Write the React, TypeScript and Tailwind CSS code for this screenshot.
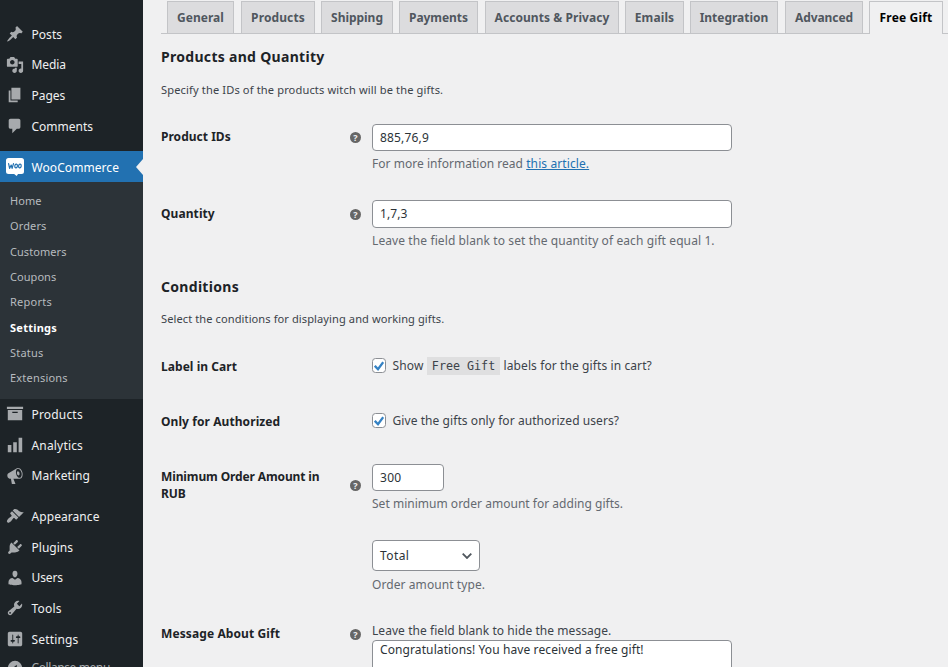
import type { ReactNode } from "react";

const ICONS = {
  post: "M10.44 3.02l1.82-1.82 6.36 6.35-1.83 1.82c-1.05-.68-2.48-.57-3.41.36l-.75.75c-.92.93-1.04 2.35-.35 3.41l-1.83 1.82-2.41-2.41-2.8 2.79c-.42.42-3.38 2.71-3.8 2.29s1.86-3.39 2.28-3.81l2.79-2.79L4.1 9.36l1.83-1.82c1.05.69 2.48.57 3.4-.36l.75-.75c.93-.92 1.05-2.35.36-3.41z",
  media: "M13 11V4c0-.55-.45-1-1-1h-1.67L9 1H5L3.67 3H2c-.55 0-1 .45-1 1v7c0 .55.45 1 1 1h10c.55 0 1-.45 1-1zM7 4.5c1.38 0 2.5 1.12 2.5 2.5S8.38 9.5 7 9.5 4.5 8.38 4.5 7 5.62 4.5 7 4.5zM14 6h5v10.5c0 1.38-1.12 2.5-2.5 2.5S14 17.88 14 16.5s1.12-2.5 2.5-2.5c.17 0 .34.02.5.05V9h-3V6zm-4 8.05V13h2v3.5c0 1.38-1.12 2.5-2.5 2.5S7 17.88 7 16.5 8.12 14 9.5 14c.17 0 .34.02.5.05z",
  page: "M6 15V2h10v13H6zm-1 1h8v2H3V5h2v11z",
  comments: "M5 2h9c1.1 0 2 .9 2 2v7c0 1.1-.9 2-2 2h-2l-5 5v-5H5c-1.1 0-2-.9-2-2V4c0-1.1.9-2 2-2z",
  archive: "M19 4.5V2H1v2.5h18zM2 17h16V5.5H2V17zm11-9.5V9H7V7.5h6z",
  chart: "M18 18V2h-4v16h4zm-6 0V7H8v11h4zm-6 0v-8H2v8h4z",
  megaphone: "M18.15 5.94c.46 1.62.38 3.22-.02 4.48-.42 1.28-1.26 2.18-2.3 2.48-.16.06-.26.06-.4.06-.06.02-.12.02-.18.02-.06.02-.14.02-.22.02h-6.8l2.22 5.5c.02.14-.06.26-.14.34-.08.1-.24.16-.34.16H6.95c-.1 0-.26-.06-.34-.16-.08-.08-.16-.2-.14-.34l-1-5.5H4.25l-.02-.02c-.5.06-1.08-.18-1.54-.62s-.88-1.08-1.06-1.88c-.24-.8-.2-1.56-.02-2.2.18-.62.58-1.08 1.06-1.3l.02-.02 9-5.4c.1-.06.18-.1.24-.16.06-.04.14-.08.24-.12.16-.08.28-.12.5-.18 1.04-.3 2.24.1 3.22.98s1.84 2.24 2.26 3.86zm-2.58 5.98h-.02c.4-.1.74-.34 1.04-.7.58-.7.86-1.76.86-3.04 0-.64-.1-1.3-.28-1.98-.34-1.36-1.02-2.5-1.78-3.24s-1.68-1.1-2.46-.88c-.82.22-1.4.96-1.7 2-.32 1.04-.28 2.36.06 3.72.38 1.36 1 2.5 1.8 3.24.78.74 1.62 1.1 2.48.88zm-2.54-7.08c.22-.04.42-.02.62.04.38.16.76.48 1.02 1s.42 1.2.42 1.78c0 .3-.04.56-.12.8-.18.48-.44.84-.86.94-.34.1-.8-.06-1.14-.4s-.64-.86-.78-1.5c-.18-.62-.12-1.24.02-1.72s.48-.84.82-.94z",
  appearance: "M14.48 11.06L7.41 3.99l1.5-1.5c.5-.56 2.3-.47 3.51.32 1.21.8 1.43 1.28 2.91 2.1 1.18.64 2.45 1.26 4.45.85zm-.71.71L6.7 4.7 4.93 6.47c-.39.39-.39 1.02 0 1.41l1.06 1.06c.39.39.39 1.03 0 1.42-.6.6-1.43 1.11-2.21 1.69-.35.26-.7.53-1.01.84C1.43 14.23.4 16.08 1.4 17.07c.99 1 2.84-.03 4.18-1.36.31-.31.58-.66.85-1.02.57-.78 1.08-1.61 1.69-2.21.39-.39 1.02-.39 1.41 0l1.06 1.06c.39.39 1.02.39 1.41 0z",
  plugins: "M13.11 4.36L9.87 7.6 8 5.73l3.24-3.24c.35-.34 1.05-.2 1.56.32.52.51.66 1.21.31 1.55zm-8 1.77l.91-1.12 9.01 9.01-1.19.84c-.71.71-2.63 1.16-3.82 1.16H6.14L4.9 17.26c-.59.59-1.54.59-2.12 0-.59-.58-.59-1.53 0-2.12l1.24-1.24v-3.88c0-1.13.4-3.19 1.09-3.89zm7.26 3.97l3.24-3.24c.34-.35 1.04-.21 1.55.31.52.51.66 1.21.31 1.55l-3.24 3.25z",
  users: "M10 9.25c-2.27 0-2.73-3.44-2.73-3.44C7 4.02 7.82 2 9.97 2c2.16 0 2.98 2.02 2.71 3.81 0 0-.41 3.44-2.68 3.44zm0 2.57L12.72 10c2.39 0 4.52 2.33 4.52 4.53v2.49s-3.65 1.13-7.24 1.13c-3.65 0-7.24-1.13-7.24-1.13v-2.49c0-2.25 1.94-4.48 4.47-4.48z",
  tools: "M16.68 9.77c-1.34 1.34-3.3 1.67-4.95.99l-5.41 6.52c-.99.99-2.59.99-3.58 0s-.99-2.59 0-3.57l6.52-5.42c-.68-1.65-.35-3.61.99-4.95 1.28-1.28 3.12-1.62 4.72-1.06l-2.89 2.89 2.82 2.82 2.86-2.87c.53 1.58.18 3.39-1.08 4.65zM3.81 16.21c.4.39 1.04.39 1.43 0 .4-.4.4-1.04 0-1.43-.39-.4-1.03-.4-1.43 0-.39.39-.39 1.03 0 1.43z",
  settings: "M18 16V4c0-1.1-.9-2-2-2H4c-1.1 0-2 .9-2 2v12c0 1.1.9 2 2 2h12c1.1 0 2-.9 2-2zM8 11h1c.55 0 1 .45 1 1s-.45 1-1 1H8v1.5c0 .28-.22.5-.5.5s-.5-.22-.5-.5V13H6c-.55 0-1-.45-1-1s.45-1 1-1h1V5.5c0-.28.22-.5.5-.5s.5.22.5.5V11zm5-2h-1c-.55 0-1-.45-1-1s.45-1 1-1h1V5.5c0-.28.22-.5.5-.5s.5.22.5.5V7h1c.55 0 1 .45 1 1s-.45 1-1 1h-1v5.5c0 .28-.22.5-.5.5s-.5-.22-.5-.5V9z",
  collapse: "M10 2a8 8 0 1 0 0 16 8 8 0 0 0 0-16zm2 4.5v7L7.5 10z",
};

type MenuEntry = [keyof typeof ICONS, string, string];

const TOP_MENU: MenuEntry[] = [
  ["post", "Posts", "tracking-[0.05px]"],
  ["media", "Media", "tracking-[-0.07px]"],
  ["page", "Pages", "tracking-[-0.02px]"],
  ["comments", "Comments", "tracking-[-0.01px]"],
];
const SHOP_MENU: MenuEntry[] = [
  ["archive", "Products", "tracking-[0.18px]"],
  ["chart", "Analytics", "tracking-[0.17px]"],
  ["megaphone", "Marketing", "tracking-[0.05px]"],
];
const SITE_MENU: MenuEntry[] = [
  ["appearance", "Appearance", "tracking-[0.07px]"],
  ["plugins", "Plugins", "tracking-[0.01px]"],
  ["users", "Users", "tracking-[-0.1px]"],
  ["tools", "Tools", "tracking-[0.22px]"],
  ["settings", "Settings", "tracking-[0.17px]"],
];
const SUBMENU: [string, string][] = [
  ["Home", "tracking-[0.05px]"],
  ["Orders", "tracking-[0.13px]"],
  ["Customers", "tracking-[0.06px]"],
  ["Coupons", "tracking-[0.06px]"],
  ["Reports", "tracking-[0.25px]"],
  ["Settings", "font-bold tracking-[0.25px] text-white"],
  ["Status", "tracking-[0.21px]"],
  ["Extensions", "tracking-[0.2px]"],
];
const TABS: [string, string][] = [
  ["General", "w-[67px] tracking-[0.03px]"],
  ["Products", "ml-[7px] w-[74px] tracking-[0.12px]"],
  ["Shipping", "ml-[6px] w-[72px] tracking-[-0.03px]"],
  ["Payments", "ml-[6px] w-[79px] tracking-[-0.05px]"],
  ["Accounts & Privacy", "ml-[7px] w-[134px] tracking-[0.06px]"],
  ["Emails", "ml-[6px] w-[59px] tracking-[0.1px]"],
  ["Integration", "ml-[6px] w-[88px] tracking-[-0.02px]"],
  ["Advanced", "ml-[7px] w-[78px] tracking-[-0.06px]"],
];

function Icon({ name }: { name: keyof typeof ICONS }) {
  return (
    <svg viewBox="0 0 20 20" className="ml-[6px] size-[18px] shrink-0 fill-[#a7aaad]" fillRule="evenodd">
      <path d={ICONS[name]} />
    </svg>
  );
}

function Menu({ items }: { items: MenuEntry[] }) {
  return (
    <ul>
      {items.map(([icon, label, cls]) => (
        <li key={label} className="flex h-[30.67px] items-center text-[12px] text-[#f0f0f1]">
          <Icon name={icon} />
          <span className={`ml-[7.5px] pt-[1.6px] ${cls}`}>{label}</span>
        </li>
      ))}
    </ul>
  );
}

function Sidebar() {
  return (
    <aside className="h-full w-[143px] shrink-0 overflow-hidden bg-[#1d2327] pt-[18.6px] whitespace-nowrap">
      <Menu items={TOP_MENU} />
      <div className="mt-[9.7px] flex h-[31px] items-center bg-[#2271b1] text-[12px] text-white">
        <svg viewBox="0 0 18 18" className="mt-px ml-[6px] size-[18px] shrink-0">
          <path d="M2.5 0h13A2.5 2.5 0 0 1 18 2.5v11a2.5 2.5 0 0 1-2.5 2.5H12l-1.3 2-2.6-2H2.5A2.5 2.5 0 0 1 0 13.5v-11A2.5 2.5 0 0 1 2.5 0z" fill="#fff" />
          <path d="M2.6 5.6l1 4.8 1.6-3.4.9 3.4 1.4-4.8" fill="none" stroke="#2271b1" strokeWidth="1.2" strokeLinejoin="round" strokeLinecap="round" />
          <ellipse cx="10.1" cy="8" rx="1.3" ry="1.9" transform="rotate(12 10.1 8)" fill="none" stroke="#2271b1" strokeWidth="1.2" />
          <ellipse cx="13.9" cy="8" rx="1.3" ry="1.9" transform="rotate(12 13.9 8)" fill="none" stroke="#2271b1" strokeWidth="1.2" />
        </svg>
        <span className="ml-[7.5px] pt-[2.4px] tracking-[0.07px]">WooCommerce</span>
        <svg viewBox="0 0 7 16" className="mt-px ml-auto h-[16px] w-[7px] shrink-0 fill-[#f0f0f1]">
          <path d="M7 0L0 8l7 8z" />
        </svg>
      </div>
      <ul className="h-[217px] bg-[#2c3338] pt-[6.8px] pl-[10px]">
        {SUBMENU.map(([label, cls]) => (
          <li key={label} className={`flex h-[25.3px] items-center text-[11px] ${label === "Settings" ? "" : "text-[#b7bbbf]"} ${cls}`}>
            {label}
          </li>
        ))}
      </ul>
      <Menu items={SHOP_MENU} />
      <div className="h-[10px]" />
      <Menu items={SITE_MENU} />
      <div className="flex h-[28px] items-center text-[12px] text-[#a7aaad]">
        <Icon name="collapse" />
        <span className="ml-[7.5px] tracking-[-0.4px]">Collapse menu</span>
      </div>
    </aside>
  );
}

function Help({ className }: { className: string }) {
  return (
    <span className={`mr-[11px] ml-auto flex size-[11px] shrink-0 items-center justify-center rounded-full bg-[#666] text-[9px] leading-[11px] font-bold text-[#f0f0f1] ${className}`}>
      ?
    </span>
  );
}

function Row({ label, labelClass, help, className, children }: { label: string; labelClass: string; help?: string; className: string; children: ReactNode }) {
  return (
    <div className={`flex items-start ${className}`}>
      <div className="flex w-[211px] shrink-0 items-start">
        <div className={`w-[165px] text-[12px] leading-[17px] font-bold text-[#1d2327] ${labelClass}`}>{label}</div>
        {help && <Help className={help} />}
      </div>
      <div className="flex flex-col items-start text-[12px] whitespace-nowrap">{children}</div>
    </div>
  );
}

const FIELD = "flex items-center rounded-[4px] border border-[#8c8f94] bg-white pl-[7px] text-[#2c3338]";
const HINT = "leading-[17px] text-[#646970]";

function Checkbox() {
  return (
    <span className="flex h-[15px] w-[14px] shrink-0 items-center justify-center rounded-[3.5px] border border-[#8c8f94] bg-white">
      <svg viewBox="0 0 10 10" className="size-[10px]" fill="none" stroke="#3582c4" strokeWidth="2.3">
        <path d="M.8 4.8L4 8.2l5.2-7" />
      </svg>
    </span>
  );
}

export default function App() {
  return (
    <div className="flex h-[667px] w-[948px] overflow-hidden bg-[#f0f0f1] font-['Noto_Sans','Open_Sans',sans-serif] text-[#3c434a]">
      <Sidebar />
      <main className="flex min-w-0 flex-1 flex-col overflow-hidden pl-[18px]">
        <nav className="flex h-[34px] shrink-0 border-b border-[#c3c4c7] pt-px pl-[6px] text-[12px] font-bold whitespace-nowrap">
          {TABS.map(([label, cls]) => (
            <span key={label} className={`flex h-[32px] shrink-0 items-center justify-center border border-b-0 border-[#c3c4c7] bg-[#dcdcde] pt-px text-[#50575e] ${cls}`}>
              {label}
            </span>
          ))}
          <span className="ml-[6px] flex h-[33px] w-[74px] shrink-0 items-center justify-center border border-b-0 border-[#c3c4c7] bg-[#f0f0f1] tracking-[0.17px] text-black">
            Free Gift
          </span>
        </nav>

        <h2 className="mt-[13px] h-[20px] shrink-0 text-[14px] leading-[20px] font-bold tracking-[0.3px] text-[#1d2327]">Products and Quantity</h2>
        <p className="mt-[13px] h-[20px] shrink-0 text-[11.1px] leading-[20px] tracking-[0.13px]">Specify the IDs of the products witch will be the gifts.</p>

        <Row label="Product IDs" labelClass="mt-[4px] tracking-[0.02px]" help="mt-[8px]" className="mt-[24px] h-[76px] shrink-0">
          <div className={`h-[27px] w-[360px] tracking-[0.17px] ${FIELD}`}>885,76,9</div>
          <p className={`mt-[4px] tracking-[0.03px] ${HINT}`}>
            For more information read <a className="tracking-[0.1px] text-[#2271b1] underline">this article.</a>
          </p>
        </Row>
        <Row label="Quantity" labelClass="mt-[5px] tracking-[0.08px]" help="mt-[9px]" className="h-[77px] shrink-0">
          <div className={`h-[28px] w-[360px] tracking-[0.1px] ${FIELD}`}>1,7,3</div>
          <p className={`mt-[4px] tracking-[0.1px] ${HINT}`}>Leave the field blank to set the quantity of each gift equal 1.</p>
        </Row>

        <h2 className="h-[20px] shrink-0 text-[14px] leading-[20px] font-bold tracking-[0.3px] text-[#1d2327]">Conditions</h2>
        <p className="mt-[12px] h-[20px] shrink-0 text-[11.1px] leading-[20px] tracking-[0.08px]">Select the conditions for displaying and working gifts.</p>

        <Row label="Label in Cart" labelClass="mt-[1px] tracking-[0.05px]" className="mt-[28px] h-[55px] shrink-0">
          <div className="flex h-[18px] items-center">
            <div className="self-start pt-px">
              <Checkbox />
            </div>
            <span className="ml-[6.5px] tracking-[0.14px]">Show</span>
            <code className="ml-[3.5px] h-[18px] w-[73px] bg-[#dfdfe0] text-center font-['DejaVu_Sans_Mono',monospace] text-[11.7px] leading-[19px]">Free Gift</code>
            <span className="ml-[3.5px] tracking-[0.1px]">labels for the gifts in cart?</span>
          </div>
        </Row>
        <Row label="Only for Authorized" labelClass="mt-[1px] tracking-[0.08px]" className="h-[52px] shrink-0">
          <div className="flex h-[17px] items-center">
            <Checkbox />
            <span className="ml-[6.5px] pt-px tracking-[0.07px]">Give the gifts only for authorized users?</span>
          </div>
        </Row>
        <Row label="Minimum Order Amount in RUB" labelClass="mt-[4px] tracking-[-0.12px]" help="mt-[16px]" className="h-[76px] shrink-0">
          <div className={`h-[27px] w-[72px] tracking-[0.3px] ${FIELD}`}>300</div>
          <p className={`mt-[4px] tracking-[0.02px] ${HINT}`}>Set minimum order amount for adding gifts.</p>
        </Row>
        <Row label="" labelClass="" className="h-[82px] shrink-0">
          <div className={`h-[31px] w-[108px] justify-between pr-[7px] tracking-[0.41px] ${FIELD}`}>
            Total
            <svg viewBox="0 0 10 6" className="h-[6px] w-[10px]" fill="none" stroke="#50575e" strokeWidth="1.8">
              <path d="M.7.7L5 5 9.3.7" />
            </svg>
          </div>
          <p className={`mt-[5px] tracking-[0.08px] ${HINT}`}>Order amount type.</p>
        </Row>
        <Row label="Message About Gift" labelClass="mt-[3px] tracking-[0.1px]" help="mt-[7px]" className="h-[80px] shrink-0">
          <p className="h-[18px] leading-[17px] tracking-[0.06px]">Leave the field blank to hide the message.</p>
          <div className="h-[60px] w-[360px] rounded-[4px] border border-[#8c8f94] bg-white pl-[7px] leading-[18px] tracking-[0.1px] text-[#2c3338]">
            Congratulations! You have received a free gift!
          </div>
        </Row>
      </main>
    </div>
  );
}
